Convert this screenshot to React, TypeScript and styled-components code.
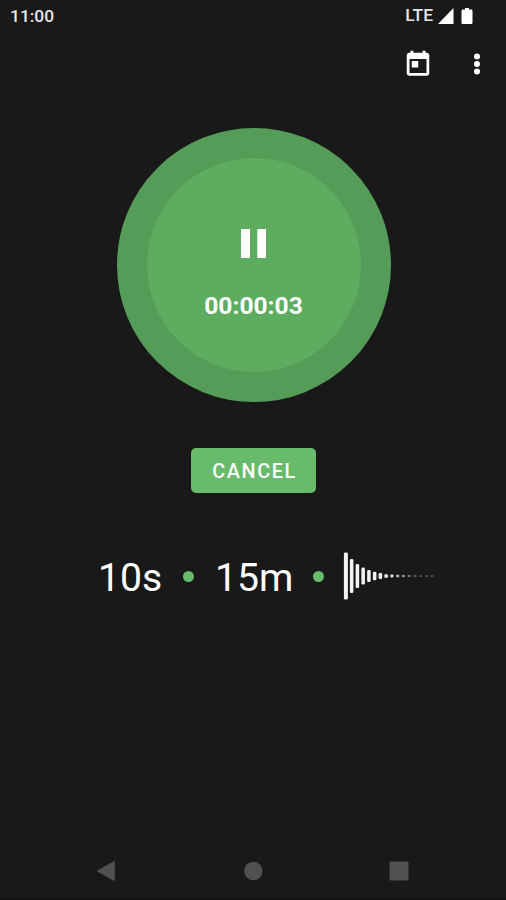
import React from "react";
import styled, { createGlobalStyle } from "styled-components";

const GlobalStyle = createGlobalStyle`
  * { box-sizing: border-box; }
  body { margin: 0; background: #191919; }
`;

const Screen = styled.main`
  width: 506px;
  height: 900px;
  display: flex;
  flex-direction: column;
  align-items: center;
  overflow: hidden;
  background: #191919;
  border-bottom: 1px solid #130f12;
  color: #fff;
  font-family: Roboto, "Liberation Sans", sans-serif;
`;

const StatusBar = styled.header`
  width: 100%;
  height: 32px;
  flex: none;
  display: flex;
  align-items: center;
  justify-content: space-between;
  padding: 0 32px 0 10px;
  color: #e6e6e6;
  font-size: 17.4px;
  line-height: 32px;
  font-weight: 500;
`;

const StatusIcons = styled.div`
  height: 32px;
  display: flex;
  align-items: center;
  font-size: 17.4px;
  line-height: 28px;

  span { padding-bottom: 2px; }
`;

const Toolbar = styled.nav`
  width: 100%;
  height: 64px;
  flex: none;
  display: flex;
  justify-content: flex-end;
  align-items: center;
  gap: 29px;
  padding-right: 14px;
`;

const IconButton = styled.button`
  width: 30px;
  height: 30px;
  padding: 0;
  border: 0;
  background: none;
  color: #fff;
  svg { display: block; }
`;

const RecordButton = styled.button`
  width: 274px;
  height: 274px;
  flex: none;
  margin: 32px 0 0 2px;
  padding: 0;
  border: 30px solid #559c58;
  border-radius: 50%;
  background: #5dac60;
  color: #fff;
  font-family: inherit;
  display: flex;
  flex-direction: column;
  align-items: center;
  svg { display: block; margin: 71px 1px 0 0; }
`;

const Timer = styled.span`
  margin-top: 30px;
  padding-right: 1px;
  font-size: 24.6px;
  line-height: 36px;
  font-weight: 700;
`;

const CancelButton = styled.button`
  width: 125px;
  height: 45px;
  flex: none;
  margin-top: 46px;
  padding: 3px 0 0 3px;
  border: 0;
  border-radius: 5px;
  background: #67bb6a;
  color: #fff;
  font: 500 19.8px/42px Roboto, sans-serif;
  letter-spacing: 1.65px;
`;

const Settings = styled.section`
  width: 100%;
  height: 60px;
  flex: none;
  margin-top: 53px;
  padding-left: 98px;
  display: flex;
  align-items: center;
`;

const Value = styled.span<{ $width: number }>`
  width: ${(p) => p.$width}px;
  font-size: 39.2px;
  line-height: 60px;
  padding-top: 4px;
`;

const Dot = styled.i<{ $after: number }>`
  width: 11px;
  height: 11px;
  flex: none;
  border-radius: 50%;
  background: #67bb6a;
  margin-right: ${(p) => p.$after}px;
`;

const Navigation = styled.footer`
  width: 100%;
  height: 56px;
  flex: none;
  margin-top: auto;
  display: flex;
  align-items: center;
  justify-content: space-between;
  padding: 0 97px 0 96px;
  svg { display: block; }
`;

const bars = [
  [47, 1], [34, 1], [24, 1], [17, 1], [12, 1], [8.5, 1], [6, 1], [3.7, 1],
  [3, 0.9], [2.4, 0.75], [2, 0.6], [1.8, 0.45], [1.6, 0.35], [1.5, 0.3], [1.5, 0.3], [1.5, 0.3],
];

function Waveform() {
  return (
    <svg width="94" height="50" viewBox="0 0 94 50" fill="#f4f4f4">
      {bars.map(([h, o], i) => {
        const width = i === 0 ? 4 : i < 8 ? 3.5 : 3;
        return (
          <rect key={i} x={3.9 + i * 5.75 - width / 2} y={25 - h / 2} width={width} height={h} rx={Math.min(1.3, h / 4)} opacity={o} />
        );
      })}
    </svg>
  );
}

export default function App() {
  return (
    <>
      <GlobalStyle />
      <Screen>
        <StatusBar>
          <span>11:00</span>
          <StatusIcons>
            <span>LTE</span>
            <svg width="41" height="20" viewBox="0 0 41 20" fill="#fff">
              <path d="M20.5 2v16H5zM30 3.5h2V2h4v1.5h2c1 0 1.5.6 1.5 1.5v11.5c0 1-.6 1.5-1.5 1.5h-8c-1 0-1.5-.5-1.5-1.5V5c0-.9.5-1.5 1.5-1.5z" />
            </svg>
          </StatusIcons>
        </StatusBar>
        <Toolbar>
          <IconButton aria-label="Calendar">
            <svg width="30" height="30" viewBox="0 0 24 24" fill="currentColor">
              <path d="M19 3h-1V1.3h-2.3V3H8.3V1.3H6V3H5c-1.1 0-2 .9-2 2v14.3c0 1.1.9 2 2 2h14c1.1 0 2-.9 2-2V5c0-1.1-.9-2-2-2zm-.2 16.1H5.2V8h13.6v11.1zM7 9.5h5.2v5.2H7z" />
            </svg>
          </IconButton>
          <IconButton aria-label="More options">
            <svg width="30" height="30" viewBox="0 0 30 30" fill="currentColor">
              <circle cx="15" cy="7.5" r="3" />
              <circle cx="15" cy="15" r="3" />
              <circle cx="15" cy="22.5" r="3" />
            </svg>
          </IconButton>
        </Toolbar>
        <RecordButton aria-label="Pause">
          <svg width="25" height="29" viewBox="0 0 25 29" fill="currentColor">
            <path d="M0 0h9v29H0zM16.3 0h8.7v29h-8.7z" />
          </svg>
          <Timer>00:00:03</Timer>
        </RecordButton>
        <CancelButton>CANCEL</CancelButton>
        <Settings>
          <Value $width={85}>10s</Value>
          <Dot $after={21} />
          <Value $width={98}>15m</Value>
          <Dot $after={18} />
          <Waveform />
        </Settings>
        <Navigation>
          <svg width="20" height="22" viewBox="0 0 20 22" fill="#505050">
            <path d="M18.8.8v20.4L1.3 11.5q-.8-.5 0-1z" />
          </svg>
          <svg width="20" height="20" viewBox="0 0 20 20" fill="#505050">
            <circle cx="10.4" cy="10" r="9.2" />
          </svg>
          <svg width="20" height="20" viewBox="0 0 20 20" fill="#505050">
            <rect x=".5" y=".5" width="19" height="19" rx="1" />
          </svg>
        </Navigation>
      </Screen>
    </>
  );
}
